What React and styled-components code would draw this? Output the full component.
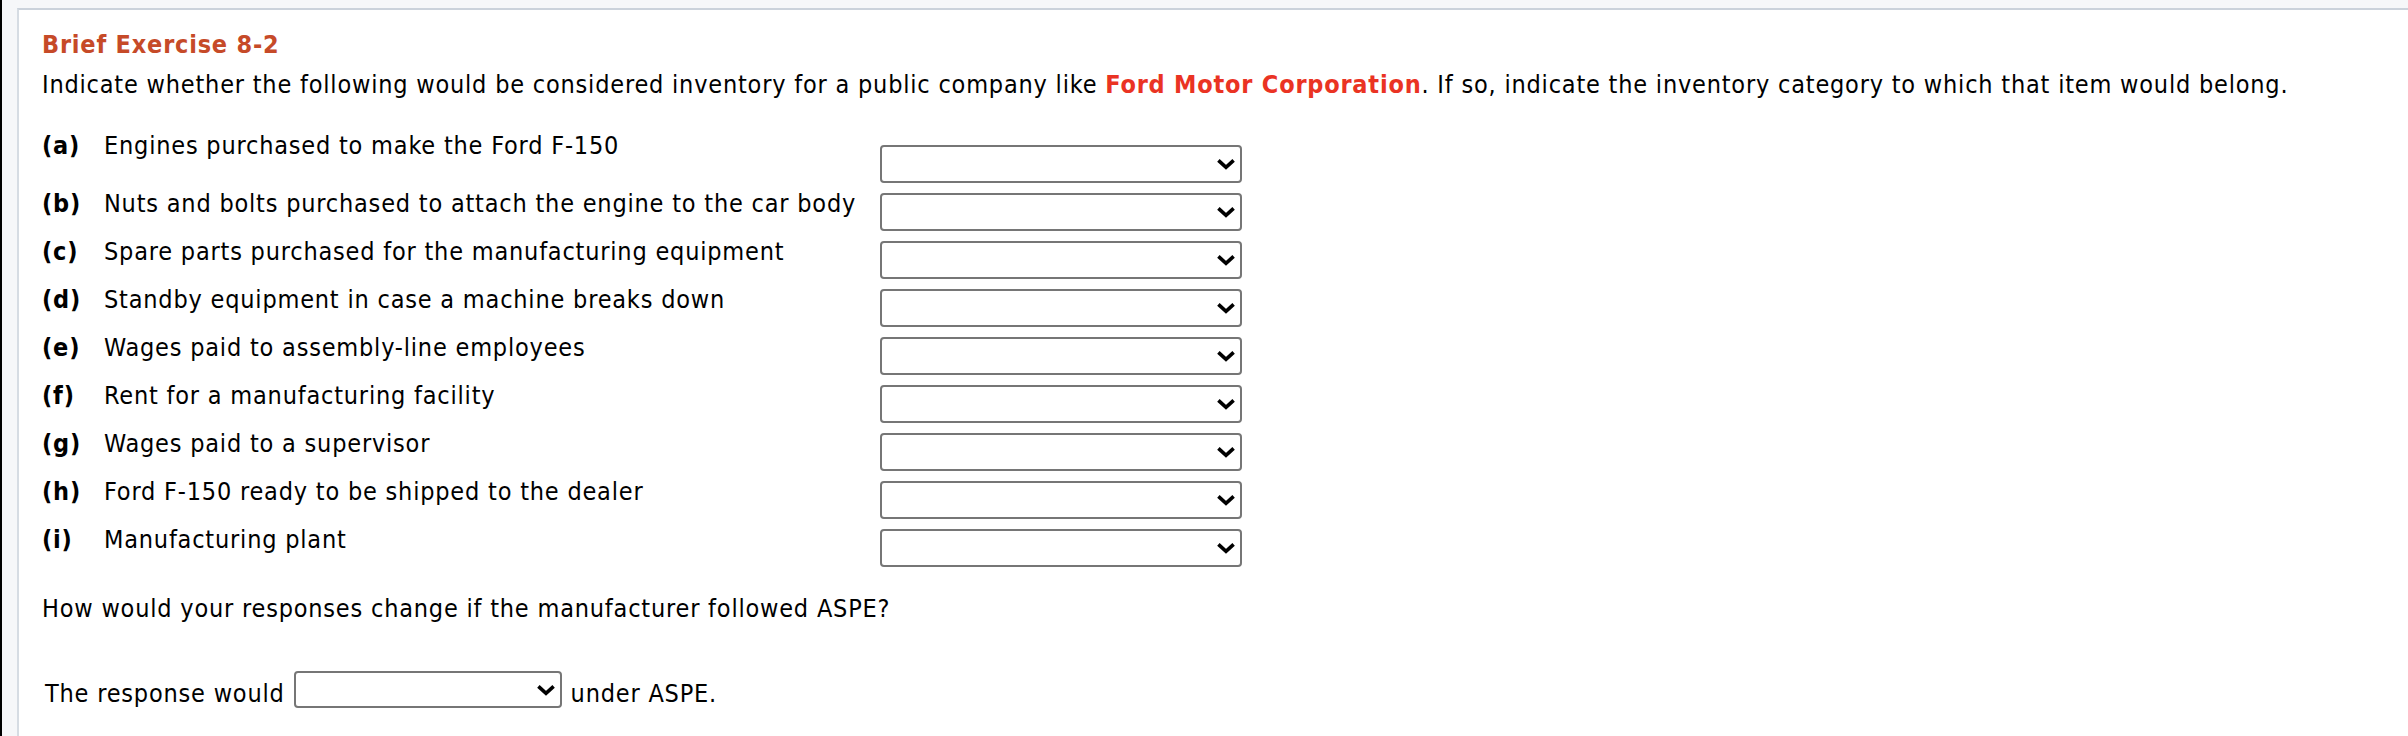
import React from 'react';
import styled, { createGlobalStyle } from 'styled-components';

const GlobalStyle = createGlobalStyle`
  html, body {
    margin: 0;
    padding: 0;
  }
  body {
    background: #f6f7f9;
    font-family: "DejaVu Sans Condensed", "DejaVu Sans", sans-serif;
  }
`;

const Page = styled.div`
  display: flex;
  min-height: 736px;
  box-sizing: border-box;
  padding: 8px 0 0 15px;
  border-left: 2px solid #000;
  background: #f6f7f9;
`;

const Panel = styled.section`
  flex: 1;
  background: #fff;
  border-top: 2px solid #cbd2db;
  border-left: 2px solid #d6dce3;
  padding: 21px 0 0 23px;
  color: #000;
  font-size: 25px;
  line-height: 28px;
  letter-spacing: 0.8px;
`;

const Title = styled.h2`
  margin: 0;
  font-size: 25px;
  line-height: 28px;
  font-weight: 700;
  color: #c64a28;
`;

const Intro = styled.p`
  margin: 12px 0 0;
  white-space: nowrap;
`;

const Company = styled.strong`
  color: #ea3323;
`;

const Items = styled.div`
  display: flex;
  flex-direction: column;
  gap: 7px;
  margin-top: 33px;
`;

const Row = styled.div`
  display: grid;
  grid-template-columns: 62px 776px 362px;
  align-items: start;
`;

const Letter = styled.span`
  font-weight: 700;
`;

const ItemText = styled.span`
  white-space: nowrap;
`;

const SelectWrap = styled.span`
  position: relative;
  display: inline-block;
  width: ${p => p.$w}px;
  height: ${p => p.$h}px;
  margin-top: ${p => p.$top || 0}px;
`;

const Select = styled.select`
  appearance: none;
  display: block;
  width: 100%;
  height: 100%;
  box-sizing: border-box;
  border: 2px solid #767676;
  border-radius: 4px;
  background: #fff;
  font: inherit;
  color: #000;
`;

const Chevron = styled.svg`
  position: absolute;
  right: 6px;
  top: 50%;
  transform: translateY(-50%);
  pointer-events: none;
`;

const Question = styled.p`
  margin: 28px 0 0;
`;

const Answer = styled.div`
  display: flex;
  align-items: flex-end;
  gap: 9px;
  margin-top: 48px;
  padding-left: 3px;
`;

const Dropdown = ({ w, h, top }) => (
  <SelectWrap $w={w} $h={h} $top={top}>
    <Select defaultValue="">
      <option value=""></option>
    </Select>
    <Chevron width="20" height="12" viewBox="0 0 20 12">
      <path d="M2.4 2.4 L10 9.4 L17.6 2.4" fill="none" stroke="#000" strokeWidth="3.6" />
    </Chevron>
  </SelectWrap>
);

const items = [
  ['a', 'Engines purchased to make the Ford F-150'],
  ['b', 'Nuts and bolts purchased to attach the engine to the car body'],
  ['c', 'Spare parts purchased for the manufacturing equipment'],
  ['d', 'Standby equipment in case a machine breaks down'],
  ['e', 'Wages paid to assembly-line employees'],
  ['f', 'Rent for a manufacturing facility'],
  ['g', 'Wages paid to a supervisor'],
  ['h', 'Ford F-150 ready to be shipped to the dealer'],
  ['i', 'Manufacturing plant'],
];

export default function App() {
  return (
    <>
      <GlobalStyle />
      <Page>
        <Panel>
          <Title>Brief Exercise 8-2</Title>
          <Intro>
            Indicate whether the following would be considered inventory for a public company like{' '}
            <Company>Ford Motor Corporation</Company>. If so, indicate the inventory category to which that item would belong.
          </Intro>
          <Items>
            {items.map(([letter, text], i) => (
              <Row key={letter}>
                <Letter>({letter})</Letter>
                <ItemText>{text}</ItemText>
                <Dropdown w={362} h={38} top={i === 0 ? 13 : 3} />
              </Row>
            ))}
          </Items>
          <Question>How would your responses change if the manufacturer followed ASPE?</Question>
          <Answer>
            <span>The response would</span>
            <Dropdown w={268} h={37} />
            <span>under ASPE.</span>
          </Answer>
        </Panel>
      </Page>
    </>
  );
}
